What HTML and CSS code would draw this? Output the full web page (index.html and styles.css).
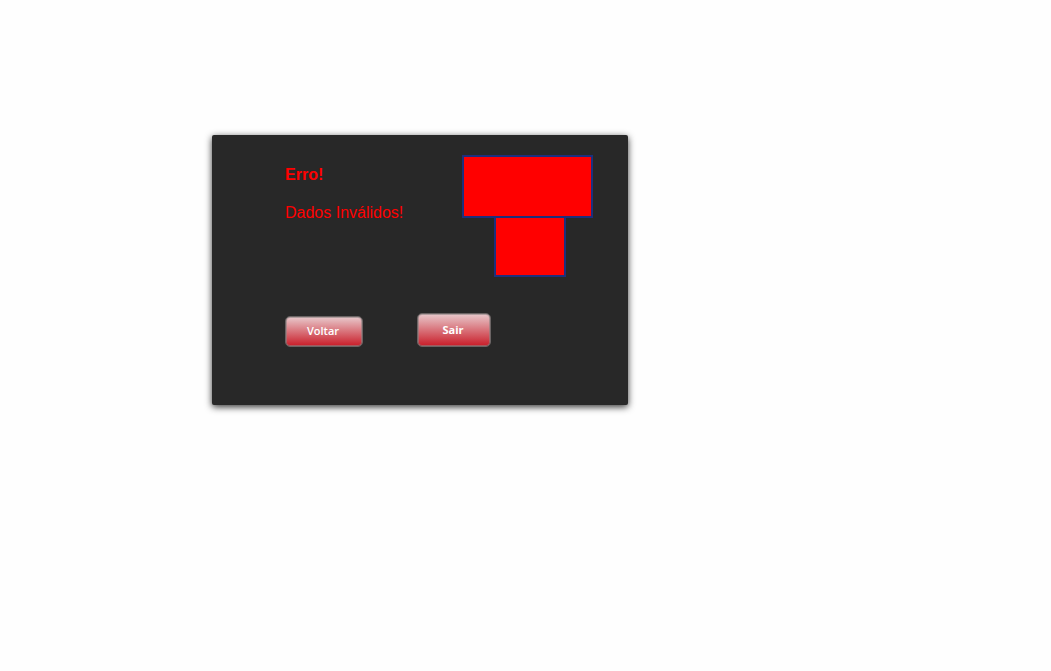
FILE: index.html
```html
<!DOCTYPE html>
<html lang="pt-BR">
<head>
  <meta charset="utf-8">
  <meta name="viewport" content="width=device-width, initial-scale=1">
  <title>Erro</title>
  <link rel="stylesheet" href="styles.css">
</head>
<body>
  <main class="page">
    <section class="panel">
      <div class="content">
        <div class="message">
          <h1 class="title">Erro!</h1>
          <p class="text">Dados Inválidos!</p>
        </div>
        <div class="figure" aria-hidden="true">
          <div class="figure-top"></div>
          <div class="figure-stem"></div>
        </div>
      </div>
      <div class="actions">
        <button class="button button-back" type="button">Voltar</button>
        <button class="button button-exit" type="button">Sair</button>
      </div>
    </section>
  </main>
</body>
</html>
```

FILE: styles.css
```css
* {
  box-sizing: border-box;
}

body {
  margin: 0;
  background: #fefefe;
  font-family: "Liberation Sans", Arial, sans-serif;
  font-size: 16px;
}

.page {
  padding: 135px 0 135px 212px;
}

.panel {
  max-width: 416px;
  padding: 20px 35px 58px 73px;
  background: #282828;
  border-radius: 2px;
  box-shadow: 0 2px 7px rgba(0, 0, 0, 0.8);
}

.content {
  display: flex;
  justify-content: space-between;
}

.message {
  padding-top: 11px;
  color: #f00;
  line-height: 18px;
}

.title {
  margin: 0 0 20px;
  font-size: 16px;
}

.text {
  margin: 0;
}

.figure {
  display: flex;
  flex-direction: column;
}

.figure-top,
.figure-stem {
  background: #f00;
  border: 2px solid #1d2f7d;
}

.figure-top {
  width: 131px;
  height: 63px;
}

.figure-stem {
  width: 72px;
  height: 59px;
  margin-left: 32px;
  border-top: 0;
}

.actions {
  display: flex;
  align-items: flex-end;
  gap: 54px;
  margin-top: 36px;
}

.button {
  padding: 0 2px 2px 0;
  color: #fff;
  font-family: "Open Sans", Tahoma, sans-serif;
  font-size: 11px;
  font-weight: 600;
  background: linear-gradient(#e8c9cc, #c91c28) padding-box;
  border: 1px solid #6b6464;
  border-radius: 5px;
  box-shadow: inset 0 0 0 1px rgba(140, 130, 130, 0.6);
}

.button-back {
  width: 78px;
  height: 31px;
}

.button-exit {
  width: 74px;
  height: 34px;
  font-weight: 700;
}
```
